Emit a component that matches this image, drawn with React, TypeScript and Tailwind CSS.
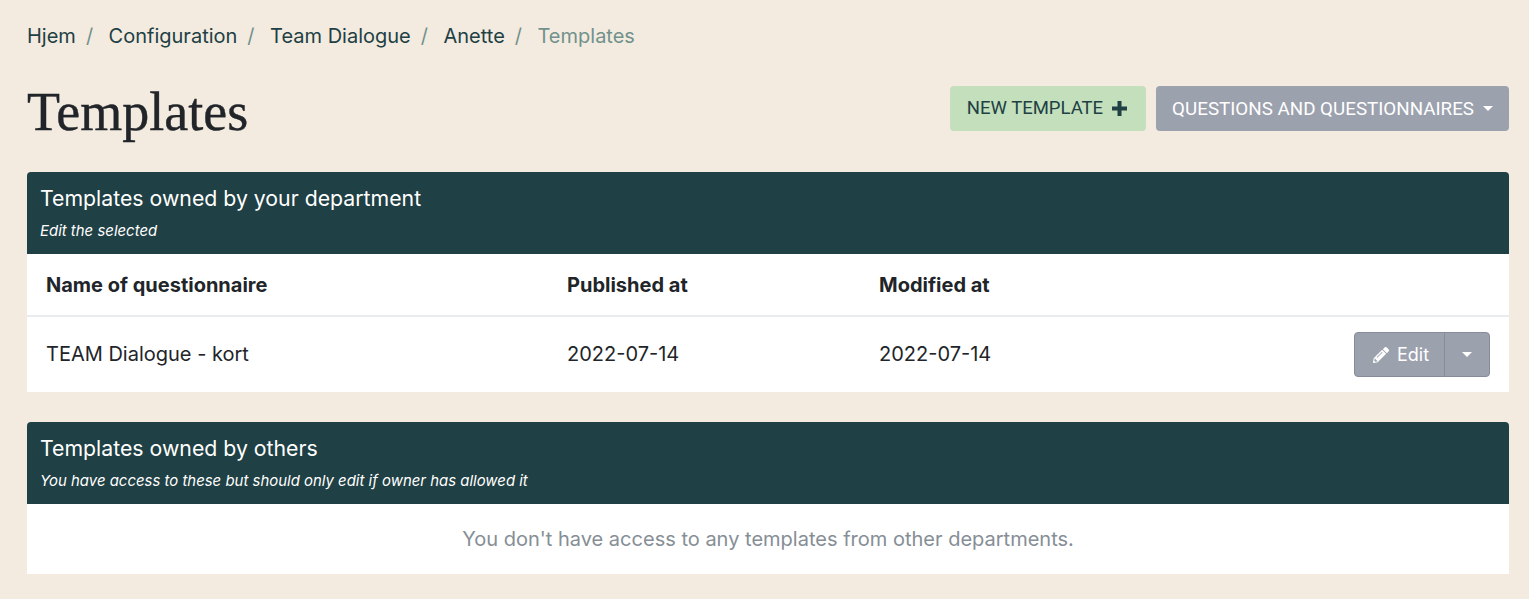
import { FaPencilAlt } from "react-icons/fa"

function Caret() {
  return <span className="inline-block w-0 h-0 border-x-[5px] border-x-transparent border-t-[5px] border-t-white" />
}

const crumbs = ["Hjem", "Configuration", "Team Dialogue", "Anette"]

function CardHeader({ title, sub }: { title: string; sub: string }) {
  return (
    <div className="bg-[#1f4044] text-white rounded-t h-[82px] px-[13px] pt-[13px]">
      <h2 className="text-[21.28px] leading-[26px]">{title}</h2>
      <p className="text-[14.95px] italic leading-[20px] mt-[10px]">{sub}</p>
    </div>
  )
}

export default function App() {
  return (
    <div className="min-h-[599px] bg-[#f4ebe0] pl-[27px] pr-5 font-['Inter',sans-serif] text-[#212529]">
      <nav className="flex items-center pt-[22px] h-[50px] text-[20px] leading-[28px] text-[#204044]">
        {crumbs.map((c) => (
          <span key={c} className="flex">
            <span>{c}</span>
            <span className="text-[#71928c] pl-[10px] pr-[15.5px]">/</span>
          </span>
        ))}
        <span className="text-[#71928c]">Templates</span>
      </nav>

      <div className="flex items-start justify-between mt-[36px] h-[86px]">
        <h1 className="font-['Liberation_Serif',serif] text-[54px] leading-[52px] [-webkit-text-stroke:0.4px_#212529] text-[#212529]">Templates</h1>
        <div className="flex gap-[10px] font-['Roboto',sans-serif] text-[18.8px]">
          <button className="h-[45px] pl-[17px] pr-[19px] rounded bg-[#c3dfbb] text-[#204044] flex items-center gap-[9px]">
            <span className="text-[18.5px] pt-[1px]">NEW TEMPLATE</span>
            <svg width="15" height="15" viewBox="0 0 15 15" fill="currentColor">
              <path d="M5.5 0h4v5.5H15v4H9.5V15h-4V9.5H0v-4h5.5z" />
            </svg>
          </button>
          <button className="h-[45px] px-4 rounded bg-[#9ca1ae] text-white flex items-center gap-[9px]">
            <span className="pt-[1px]">QUESTIONS AND QUESTIONNAIRES</span> <Caret />
          </button>
        </div>
      </div>

      <section>
        <CardHeader title="Templates owned by your department" sub="Edit the selected" />
        <div className="bg-white text-[20px]">
          <div className="grid grid-cols-[521px_312px_1fr] h-[63px] items-center px-[19px] border-b-2 border-[#e9ecef] font-bold">
            <span>Name of questionnaire</span>
            <span>Published at</span>
            <span>Modified at</span>
          </div>
          <div className="grid grid-cols-[521px_312px_1fr] h-[75px] items-center pl-[19px] pr-[19px]">
            <span className="-mt-[2px]">TEAM Dialogue - kort</span>
            <span className="-mt-[2px]">2022-07-14</span>
            <div className="flex items-center justify-between">
              <span className="-mt-[2px]">2022-07-14</span>
              <div className="flex h-[45px] w-[136px] rounded border border-[#868c99] bg-[#9ca1ae] text-white">
                <button className="w-[90px] pl-[3px] flex items-center justify-center gap-2 text-[18px] border-r border-[#868c99]">
                  <FaPencilAlt size={16} /> Edit
                </button>
                <button className="flex-1 flex items-center justify-center">
                  <Caret />
                </button>
              </div>
            </div>
          </div>
        </div>
      </section>

      <section className="mt-[30px]">
        <CardHeader
          title="Templates owned by others"
          sub="You have access to these but should only edit if owner has allowed it"
        />
        <div className="bg-white h-[70px] flex items-center justify-center text-[20.03px] text-[#868e96]">
          You don't have access to any templates from other departments.
        </div>
      </section>
    </div>
  )
}
